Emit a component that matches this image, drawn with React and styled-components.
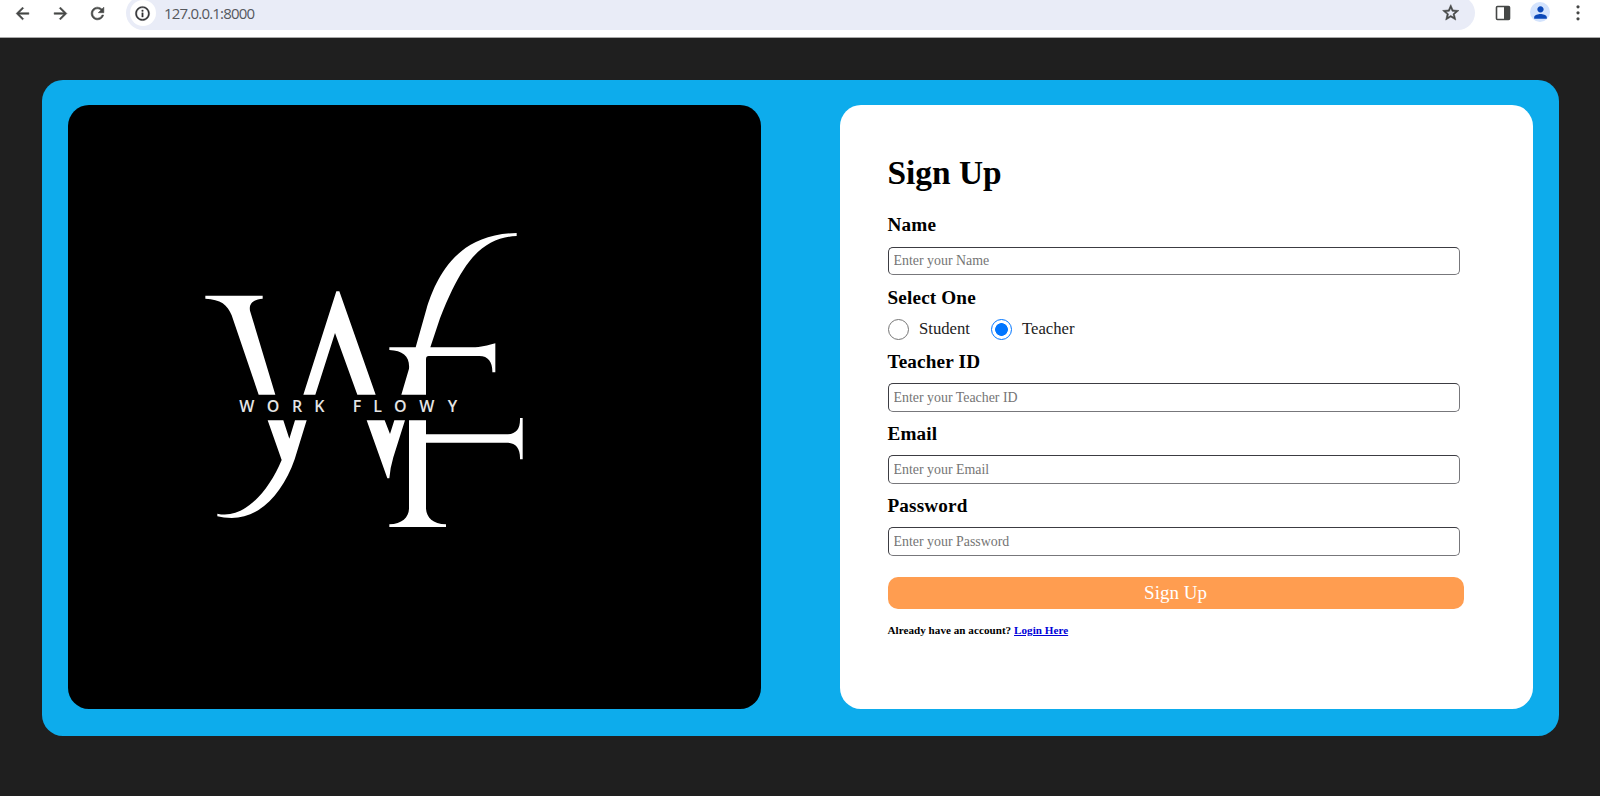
import React, { useState } from "react";
import styled, { createGlobalStyle } from "styled-components";
import {
  MdArrowBack,
  MdArrowForward,
  MdRefresh,
  MdInfoOutline,
  MdStarBorder,
  MdPerson,
} from "react-icons/md";

const GlobalStyle = createGlobalStyle`
  *, *::before, *::after { box-sizing: border-box; }
  body {
    margin: 0;
    background: #1f1f1f;
    font-family: "Liberation Serif", "Times New Roman", serif;
    color: #000;
  }
`;

const Page = styled.div`
  height: 796px;
  display: flex;
  flex-direction: column;
  overflow: hidden;
`;

const Toolbar = styled.header`
  height: 38px;
  flex: none;
  display: flex;
  align-items: flex-start;
  padding: 0 12px;
  background: #fff;
  border-bottom: 1px solid #a9a9a9;
  overflow: hidden;
`;

const NavButtons = styled.div`
  display: flex;
  gap: 16.5px;
  padding-right: 17.5px;
`;

const IconSlot = styled.span`
  width: 21px;
  height: 26px;
  display: flex;
  align-items: center;
  justify-content: center;
  color: #454746;
  svg { stroke: currentColor; stroke-width: ${(p) => (p.$bold ? 0.7 : 0)}; }
  path[fill="none"] { stroke: none; }
`;

const AddressBar = styled.div`
  flex: 1;
  height: 34px;
  margin-top: -4px;
  padding: 0 13.5px 0 4px;
  display: flex;
  align-items: center;
  border-radius: 17px;
  background: #e9ecf7;
`;

const SiteInfo = styled.span`
  width: 26px;
  height: 26px;
  border-radius: 50%;
  background: #fff;
  color: #303234;
  display: flex;
  align-items: center;
  justify-content: center;
  svg { stroke: currentColor; stroke-width: 0.5; }
  path[fill="none"] { stroke: none; }
`;

const Url = styled.span`
  flex: 1;
  padding-left: 8.5px;
  font: 400 15px/20px "Open Sans", "Noto Sans", sans-serif;
  letter-spacing: -0.8px;
  color: #55585d;
`;

const Tools = styled.div`
  display: flex;
  gap: 16.5px;
  padding-left: 17px;
`;

const Avatar = styled.span`
  width: 20px;
  height: 20px;
  flex: none;
  margin-top: -2px;
  border-radius: 50%;
  background: #d3e3fd;
  color: #0b48b8;
  display: flex;
  align-items: center;
  justify-content: center;
`;

const Stage = styled.main`
  flex: 1;
  padding: 41.5px 41px 60px 42px;
  display: flex;
`;

const Card = styled.section`
  flex: 1;
  display: flex;
  justify-content: space-between;
  padding: 25.5px 26px 27px 25.5px;
  border-radius: 21px;
  background: #0dacec;
`;

const Panel = styled.div`
  width: 693px;
  border-radius: 21px;
  background: ${(p) => (p.$dark ? "#000" : "#fff")};
  padding: ${(p) => (p.$dark ? "115px 0 0 122.5px" : "47px 69px 0 47.5px")};
`;

const Title = styled.h1`
  margin: 0 0 20px;
  font-size: 33.4px;
  line-height: 42px;
  font-weight: 700;
`;

const Label = styled.label`
  display: block;
  margin-bottom: ${(p) => p.$gap ?? 10}px;
  font-size: 19.2px;
  line-height: 22px;
  font-weight: 700;
  letter-spacing: 0.15px;
`;

const Input = styled.input`
  display: block;
  width: 572px;
  height: ${(p) => (p.$compact ? 28 : 29)}px;
  margin: 0 0 ${(p) => (p.$compact ? 12 : 11)}px;
  padding: 0 5px;
  border: 1px solid;
  border-color: #3c3c42 #77777b #77777b #3c3c42;
  border-radius: 5px;
  outline: none;
  background: #fff;
  font: 13.9px "Liberation Serif", serif;
  &::placeholder { color: #757575; opacity: 1; }
`;

const Choices = styled.div`
  display: flex;
  height: 22px;
  margin-bottom: 11px;
`;

const Choice = styled.label`
  display: flex;
  align-items: center;
  gap: 10.5px;
  width: 103px;
  font-size: 16.7px;
  line-height: 22px;
  color: #222;
`;

const Radio = styled.input`
  appearance: none;
  width: 21px;
  height: 21px;
  flex: none;
  margin: 0;
  border: 1px solid #767676;
  border-radius: 50%;
  &:checked {
    border-color: #0075ff;
    background: radial-gradient(circle, #0075ff 6px, #fff 6.7px);
  }
`;

const Submit = styled.button`
  display: block;
  width: 576px;
  height: 32px;
  margin: 21px 0 14px;
  padding: 0;
  border: 0;
  border-radius: 10px;
  background: #ff9d50;
  color: #fff;
  font: 19px "Liberation Serif", serif;
`;

const Hint = styled.p`
  margin: 0;
  font-size: 11.1px;
  line-height: 14px;
  font-weight: 700;
  letter-spacing: 0.04px;
  a { color: #0000d8; text-decoration: underline; }
`;

const LogoSvg = styled.svg`
  display: block;
  width: 350px;
  height: 320px;
`;

const Brand = styled.text`
  font-family: "Open Sans", "Noto Sans", sans-serif;
  font-size: 48px;
  font-weight: 600;
  fill: #e4e4e4;
`;

function Logo() {
  return (
    <LogoSvg viewBox="0 0 1050 960" fill="#fff" role="img">
      <path d="M46 227H218V236C192 238 176 250 180 272L256 524H206L125 286C113 254 92 238 46 236Z" />
      <path d="M439 214H448L557 524H502L435 339L376 524H340Z" />
      <path d="M980 39C905 40 850 65 815 93C750 145 722 225 710 265L677 382H598V390C640 392 660 410 657 446L634 524H708V418Q708 408 716 408H868C896 408 908 428 907 457H916V370C892 376 874 382 846 382H721L750 295C775 230 800 180 820 150C860 85 915 50 980 48Z" />
      <path d="M233 601H280L298 656L315 601H350L314 718C277 824 207 894 125 894Q100 894 82 889V881C158 899 232 822 275 720Z" />
      <path d="M530 601H584L600 642L613 601H645L610 712Q600 746 598 775H592Z" />
      <path d="M657 601H708V643H948C978 643 991 628 990 594H998V718H990C991 684 977 668 948 668H708V866C710 892 728 912 768 913V921H598V913C636 912 656 892 657 866Z" />
      <Brand y="577" x="148 230 306 373">WORK</Brand>
      <Brand y="577" x="488 550 612 688 773">FLOWY</Brand>
    </LogoSvg>
  );
}

function SidePanelIcon() {
  return (
    <svg width="16" height="16" viewBox="0 0 16 16">
      <rect x="1.5" y="1.5" width="13" height="13" rx="1" fill="none" strokeWidth="1.6" />
      <path d="M9 1.5h5.5v13H9z" fill="#454746" />
    </svg>
  );
}

function MenuDots() {
  return (
    <svg width="6" height="18" viewBox="0 0 6 18" fill="#454746">
      <circle cx="3" cy="2.8" r="1.6" />
      <circle cx="3" cy="8.8" r="1.6" />
      <circle cx="3" cy="14.8" r="1.6" />
    </svg>
  );
}

function Field({ label, type = "text", compact = false }) {
  const id = label.toLowerCase().replace(" ", "-");
  return (
    <div>
      <Label htmlFor={id} $gap={compact ? 11 : 10}>{label}</Label>
      <Input id={id} type={type} $compact={compact} placeholder={`Enter your ${label}`} />
    </div>
  );
}

export default function App() {
  const [role, setRole] = useState("Teacher");
  return (
    <Page>
      <GlobalStyle />
      <Toolbar>
        <NavButtons>
          <IconSlot $bold><MdArrowBack size={19} /></IconSlot>
          <IconSlot $bold><MdArrowForward size={19} /></IconSlot>
          <IconSlot $bold><MdRefresh size={19} /></IconSlot>
        </NavButtons>
        <AddressBar>
          <SiteInfo><MdInfoOutline size={17} /></SiteInfo>
          <Url>127.0.0.1:8000</Url>
          <IconSlot $bold><MdStarBorder size={19.5} /></IconSlot>
        </AddressBar>
        <Tools>
          <IconSlot><SidePanelIcon /></IconSlot>
          <IconSlot><Avatar><MdPerson size={19} /></Avatar></IconSlot>
          <IconSlot><MenuDots /></IconSlot>
        </Tools>
      </Toolbar>
      <Stage>
        <Card>
          <Panel $dark>
            <Logo />
          </Panel>
          <Panel as="form" onSubmit={(e) => e.preventDefault()}>
            <Title>Sign Up</Title>
            <Field label="Name" compact />
            <Label as="div" $gap={9}>Select One</Label>
            <Choices>
              {["Student", "Teacher"].map((name) => (
                <Choice key={name}>
                  <Radio type="radio" name="role" checked={role === name} onChange={() => setRole(name)} />
                  {name}
                </Choice>
              ))}
            </Choices>
            <Field label="Teacher ID" />
            <Field label="Email" />
            <Field label="Password" type="password" />
            <Submit>Sign Up</Submit>
            <Hint>Already have an account? <a href="#login">Login Here</a></Hint>
          </Panel>
        </Card>
      </Stage>
    </Page>
  );
}
